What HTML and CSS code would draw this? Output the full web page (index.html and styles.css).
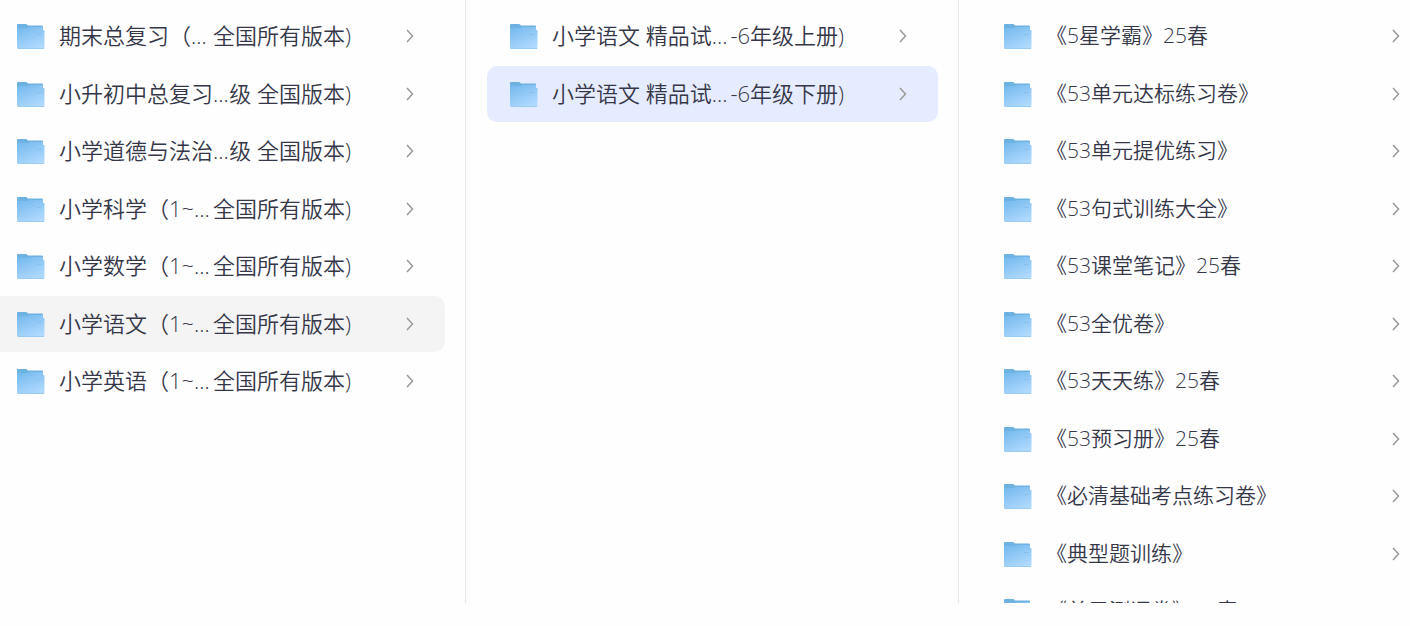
FILE: index.html
```
<!DOCTYPE html>
<html lang="zh-CN">
<head>
  <meta charset="UTF-8" />
  <title>小学语文</title>
  <link rel="stylesheet" href="styles.css">
</head>
<body>

  <svg class="sprite" aria-hidden="true">
    <defs>
      <linearGradient id="folderBack" x1="0" y1="0" x2="0" y2="1">
        <stop offset="0" stop-color="#6cb0df" />
        <stop offset="1" stop-color="#74b9ee" />
      </linearGradient>
      <linearGradient id="folderFront" x1="0.200" y1="0" x2="0.700" y2="1">
        <stop offset="0" stop-color="#76baee" />
        <stop offset="1" stop-color="#b2daff" />
      </linearGradient>
    </defs>
    <symbol id="folder" viewBox="0 0 28 25">
      <path d="M0 1Q0 0 1 0H9Q10 0 11 1.500H25Q26 1.500 26 2.500V12H0Z" fill="url(#folderBack)" />
      <path d="M0 4H11L13 3H26V6H27Q27.500 6 27.500 7V23.500Q27.500 25 26 25H1.500Q0 25 0 23.500Z" fill="url(#folderFront)" />
      <path d="M20 10.500H24.500" stroke="#83c0f0" stroke-width="1" />
      <path d="M1 24.500H27" stroke="#9acbf3" stroke-width="1" />
    </symbol>
    <symbol id="arrow" viewBox="0 0 8 14">
      <path d="M1 1L6.500 7L1 13" fill="none" stroke="#999" stroke-width="1.500" />
    </symbol>
  </svg>

  <main class="columns">
    <ul class="column">
      <li><a class="item" href="#"><svg class="folder"><use href="#folder" /></svg><span class="name"><span>期末总复习（...</span><span>全国所有版本)</span></span><svg class="arrow"><use href="#arrow" /></svg></a></li>
      <li><a class="item" href="#"><svg class="folder"><use href="#folder" /></svg><span class="name"><span>小升初中总复习...</span><span>级 全国版本)</span></span><svg class="arrow"><use href="#arrow" /></svg></a></li>
      <li><a class="item" href="#"><svg class="folder"><use href="#folder" /></svg><span class="name"><span>小学道德与法治...</span><span>级 全国版本)</span></span><svg class="arrow"><use href="#arrow" /></svg></a></li>
      <li><a class="item" href="#"><svg class="folder"><use href="#folder" /></svg><span class="name"><span>小学科学（1~...</span><span>全国所有版本)</span></span><svg class="arrow"><use href="#arrow" /></svg></a></li>
      <li><a class="item" href="#"><svg class="folder"><use href="#folder" /></svg><span class="name"><span>小学数学（1~...</span><span>全国所有版本)</span></span><svg class="arrow"><use href="#arrow" /></svg></a></li>
      <li><a class="item opened" href="#"><svg class="folder"><use href="#folder" /></svg><span class="name"><span>小学语文（1~...</span><span>全国所有版本)</span></span><svg class="arrow"><use href="#arrow" /></svg></a></li>
      <li><a class="item" href="#"><svg class="folder"><use href="#folder" /></svg><span class="name"><span>小学英语（1~...</span><span>全国所有版本)</span></span><svg class="arrow"><use href="#arrow" /></svg></a></li>
    </ul>

    <ul class="column middle">
      <li><a class="item" href="#"><svg class="folder"><use href="#folder" /></svg><span class="name"><span>小学语文 精品试...</span><span>-6年级上册)</span></span><svg class="arrow"><use href="#arrow" /></svg></a></li>
      <li><a class="item selected" href="#"><svg class="folder"><use href="#folder" /></svg><span class="name"><span>小学语文 精品试...</span><span>-6年级下册)</span></span><svg class="arrow"><use href="#arrow" /></svg></a></li>
    </ul>

    <ul class="column last">
      <li><a class="item" href="#"><svg class="folder"><use href="#folder" /></svg><span class="name">《5星学霸》25春</span><svg class="arrow"><use href="#arrow" /></svg></a></li>
      <li><a class="item" href="#"><svg class="folder"><use href="#folder" /></svg><span class="name">《53单元达标练习卷》</span><svg class="arrow"><use href="#arrow" /></svg></a></li>
      <li><a class="item" href="#"><svg class="folder"><use href="#folder" /></svg><span class="name">《53单元提优练习》</span><svg class="arrow"><use href="#arrow" /></svg></a></li>
      <li><a class="item" href="#"><svg class="folder"><use href="#folder" /></svg><span class="name">《53句式训练大全》</span><svg class="arrow"><use href="#arrow" /></svg></a></li>
      <li><a class="item" href="#"><svg class="folder"><use href="#folder" /></svg><span class="name">《53课堂笔记》25春</span><svg class="arrow"><use href="#arrow" /></svg></a></li>
      <li><a class="item" href="#"><svg class="folder"><use href="#folder" /></svg><span class="name">《53全优卷》</span><svg class="arrow"><use href="#arrow" /></svg></a></li>
      <li><a class="item" href="#"><svg class="folder"><use href="#folder" /></svg><span class="name">《53天天练》25春</span><svg class="arrow"><use href="#arrow" /></svg></a></li>
      <li><a class="item" href="#"><svg class="folder"><use href="#folder" /></svg><span class="name">《53预习册》25春</span><svg class="arrow"><use href="#arrow" /></svg></a></li>
      <li><a class="item" href="#"><svg class="folder"><use href="#folder" /></svg><span class="name">《必清基础考点练习卷》</span><svg class="arrow"><use href="#arrow" /></svg></a></li>
      <li><a class="item" href="#"><svg class="folder"><use href="#folder" /></svg><span class="name">《典型题训练》</span><svg class="arrow"><use href="#arrow" /></svg></a></li>
      <li><a class="item" href="#"><svg class="folder"><use href="#folder" /></svg><span class="name">《单元测评卷》25春</span><svg class="arrow"><use href="#arrow" /></svg></a></li>
    </ul>
  </main>

</body>
</html>
```
FILE: styles.css
```
* {
  box-sizing: border-box;
}
body {
  margin: 0;
  height: 100vh;
  padding-bottom: 23px;
  overflow: hidden;
  background: #fefefe;
  color: #353749;
  font-family: "Open Sans", "Noto Sans CJK SC", sans-serif;
  font-size: 22px;
  font-weight: 350;
}
.sprite {
  position: absolute;
  width: 0;
  height: 0;
}
.columns {
  display: grid;
  grid-template-columns: 466fr 493fr 451fr;
  height: 100%;
}
.column {
  margin: 0;
  padding: 8px 20px 0 0;
  list-style: none;
  overflow: hidden;
  border-right: 1px solid #e8e8ea;
}
.column li {
  margin-bottom: 1px;
}
.column li:nth-child(odd) {
  margin-bottom: 2px;
}
.middle {
  padding-left: 21px;
}
.last {
  padding-left: 22px;
  padding-right: 0;
  border-right: none;
  font-size: 21px;
}
.item {
  display: flex;
  align-items: center;
  height: 56px;
  padding: 0 31px 0 17px;
  border-radius: 0 10px 10px 0;
  color: inherit;
  text-decoration: none;
  white-space: nowrap;
}
.middle .item {
  padding-left: 23px;
  border-radius: 10px;
}
.last .item {
  padding-left: 23px;
  padding-right: 10px;
}
.item:hover,
.opened {
  background: #f4f4f4;
}
.selected {
  background: #e5ecff;
}
.folder {
  flex: none;
  width: 28px;
  height: 25px;
  margin-right: 14px;
}
.name {
  display: flex;
  justify-content: space-between;
  width: 292px;
  padding-bottom: 5px;
}
.arrow {
  flex: none;
  width: 8px;
  height: 14px;
  margin-left: auto;
}
```
